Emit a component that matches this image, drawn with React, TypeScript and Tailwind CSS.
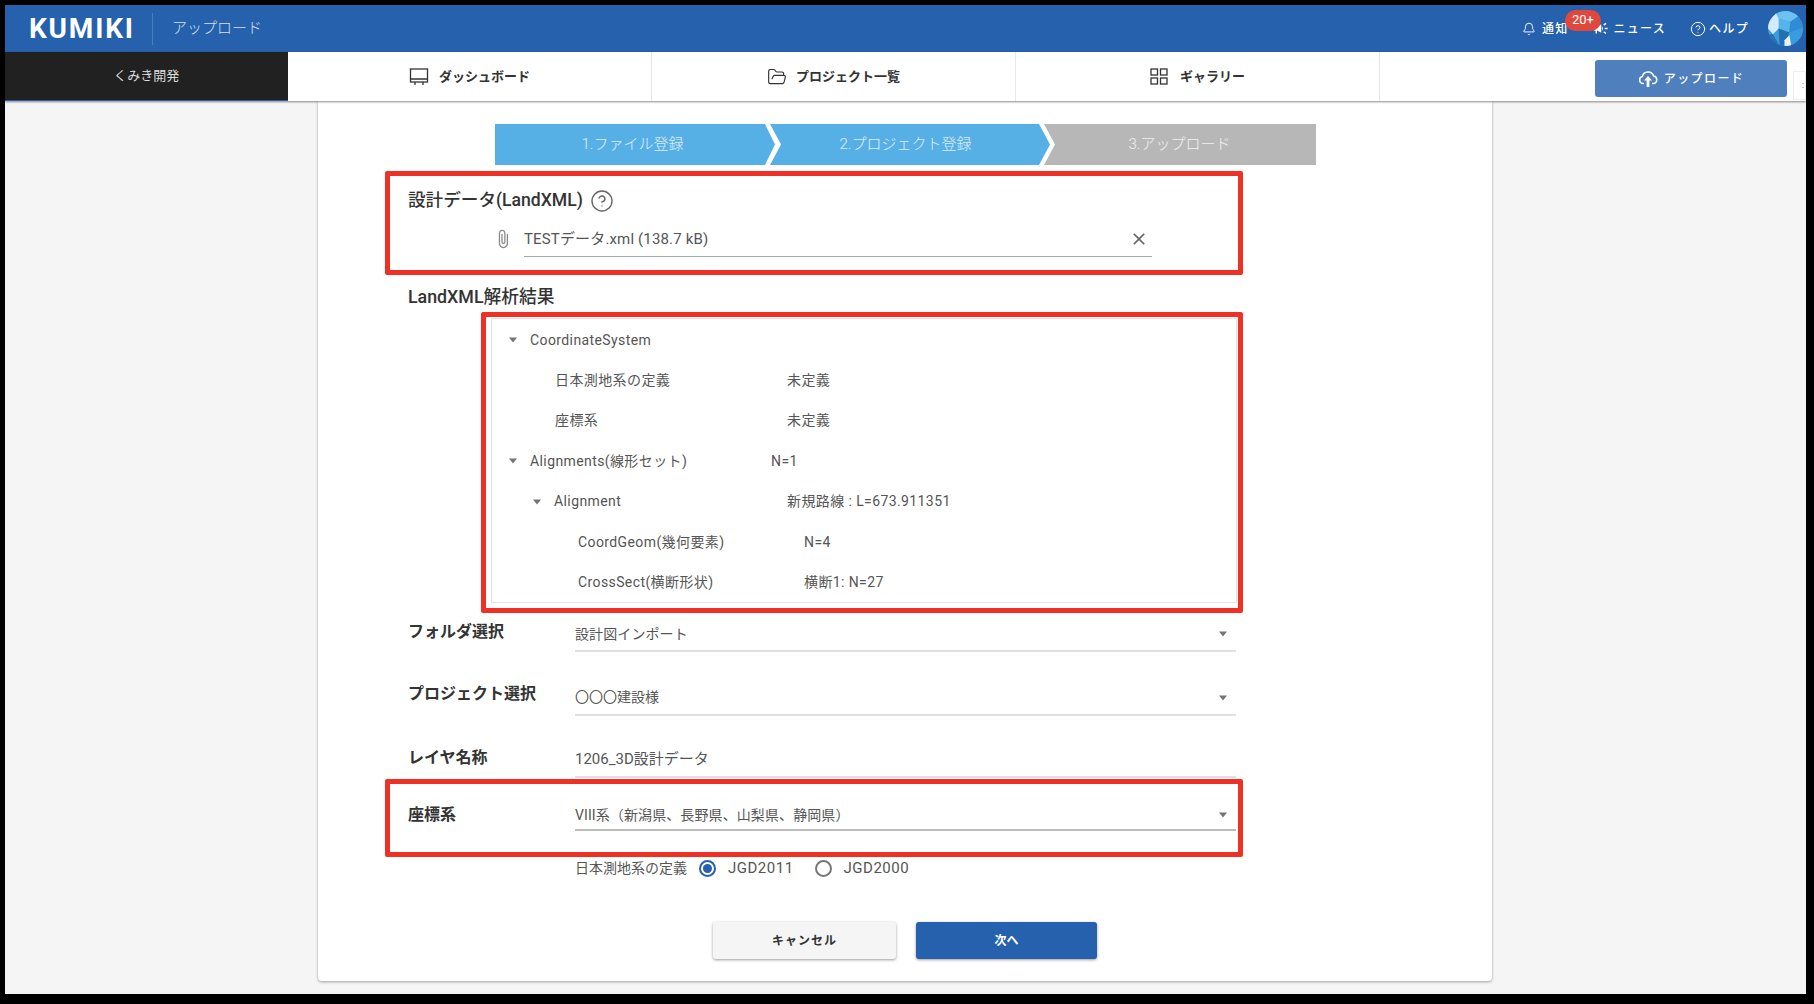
import React from "react";
import { Bell, CircleHelp, FolderOpen } from "lucide-react";
import { MdAttachFile, MdCampaign, MdClose } from "react-icons/md";

function Caret({ className = "" }: { className?: string }) {
  return (
    <svg width="10" height="6" viewBox="0 0 10 6" className={className}>
      <path d="M1 0.5h8L5 5.5z" fill="#757575" />
    </svg>
  );
}

function MonitorIcon() {
  return (
    <svg width="20" height="18" viewBox="0 0 20 18" fill="none" stroke="#333" strokeWidth="1.3">
      <rect x="1.5" y="1" width="17" height="13" />
      <path d="M1.5 11h17M6 14v3M14 14v3" />
    </svg>
  );
}

function GridIcon() {
  return (
    <svg width="18" height="17" viewBox="0 0 18 17" fill="none" stroke="#333" strokeWidth="1.3">
      <rect x="1" y="1" width="6.5" height="6" />
      <rect x="10.5" y="1" width="6.5" height="6" />
      <rect x="1" y="10" width="6.5" height="6" />
      <rect x="10.5" y="10" width="6.5" height="6" />
    </svg>
  );
}

function UploadIcon() {
  return (
    <svg width="20" height="18" viewBox="0 0 20 18">
      <path
        d="M6 13.5H5a3.6 3.6 0 0 1-.6-7.1A5.8 5.8 0 0 1 15.6 6a3.8 3.8 0 0 1 0 7.5H14"
        fill="none"
        stroke="#fff"
        strokeWidth="1.5"
      />
      <path d="M10 6l4 4.5h-2.6V17H8.6v-6.5H6z" fill="#fff" />
    </svg>
  );
}

function Avatar() {
  return (
    <svg width="35" height="35" viewBox="0 0 36 36" className="rounded-full">
      <rect width="36" height="36" fill="#3a9ce0" />
      <path d="M8 2l11-3 13 6-9 6-12-3z" fill="#6cc2f0" />
      <path d="M11 8l12 3-1 11-11-4z" fill="#56b4ec" />
      <path d="M23 11l9-6 4 12-14 5z" fill="#2f8bd6" />
      <path d="M0 10l8-8 3 6 0 10-6 6-5-6z" fill="#d4ecf9" />
      <path d="M0 24l5 0 7 12H0z" fill="#2a6fae" />
      <path d="M11 18l11 4-5 14h-5z" fill="#2470ae" />
      <path d="M17 30l5-5 2 11h-7z" fill="#e6f1f8" />
      <path d="M24 24l12-5v17H24z" fill="#3b9be0" />
    </svg>
  );
}

function TreeRow({
  pad,
  labelW,
  caret,
  label,
  value,
}: {
  pad: string;
  labelW: string;
  caret?: boolean;
  label: string;
  value?: string;
}) {
  return (
    <div className={`flex items-center h-[40.4px] text-[14px] tracking-[0.4px] text-[#555] ${pad}`}>
      {caret && <Caret className="mr-[12px]" />}
      <span className={`whitespace-nowrap ${labelW}`}>{label}</span>
      {value && <span className="whitespace-nowrap">{value}</span>}
    </div>
  );
}

export default function App() {
  return (
    <div className="h-screen w-screen overflow-hidden bg-black pt-[5px] pl-[5px] pr-[8px] pb-[10px] font-['Roboto','Noto_Sans_CJK_JP',sans-serif]">
      <div className="h-full bg-[#f5f5f5] flex flex-col">
        {/* header */}
        <div className="h-[47px] shrink-0 bg-[#2561ac] flex items-center pl-[24px] pr-[3px] text-white">
          <span className="text-[28px] font-bold tracking-[1.8px] leading-none w-[123px]">KUMIKI</span>
          <div className="w-px h-[32px] bg-[#4a7fbd]" />
          <span className="ml-[19px] text-[15px] font-light text-[#d5e0ef]">アップロード</span>

          <div className="ml-auto flex items-center text-[12px] font-medium tracking-[1.3px]">
            <div className="relative flex items-center gap-[6px] h-[16px]">
              <Bell size={14} strokeWidth={1.6} />
              <span>通知</span>
              <span className="absolute left-[43px] top-[-11px] w-[36px] h-[21px] rounded-full bg-[#e0483e] flex items-center justify-center text-[13px] font-normal tracking-normal">
                20+
              </span>
            </div>
            <div className="flex items-center gap-[4px] ml-[24px]">
              <MdCampaign size={17} />
              <span>ニュース</span>
            </div>
            <div className="flex items-center gap-[3px] ml-[24px]">
              <CircleHelp size={16} strokeWidth={1.5} />
              <span>ヘルプ</span>
            </div>
            <div className="ml-[19px]">
              <Avatar />
            </div>
          </div>
        </div>

        {/* nav */}
        <div className="h-[49px] shrink-0 bg-white flex shadow-[0_1px_2px_rgba(0,0,0,0.45)] relative z-10">
          <div className="w-[283px] bg-[#212121] border-b border-[#2561ac] flex items-center justify-center text-[13px] text-[#ddd]">
            くみき開発
          </div>
          <div className="w-[364px] border-r border-[#e8e8e8] flex items-center justify-center gap-[10px] text-[13px] font-bold text-[#333]">
            <MonitorIcon />
            ダッシュボード
          </div>
          <div className="w-[364px] border-r border-[#e8e8e8] flex items-center justify-center gap-[9px] text-[13px] font-bold text-[#333]">
            <FolderOpen size={20} strokeWidth={1.4} className="text-[#333]" />
            プロジェクト一覧
          </div>
          <div className="w-[364px] border-r border-[#e8e8e8] flex items-center justify-center gap-[12px] text-[13px] font-bold text-[#333]">
            <GridIcon />
            ギャラリー
          </div>
          <button className="ml-[215px] mt-[8px] w-[192px] h-[37px] rounded-[3px] bg-[#4f80bd] flex items-center justify-center gap-[6px] text-white text-[12px] font-medium tracking-[1.4px]">
            <UploadIcon />
            アップロード
          </button>
          <div className="ml-[6px] mt-[19px] w-[13px] h-[29px] border border-[#eee] flex items-center justify-end overflow-hidden text-[9px] text-[#555]">
            <span className="mr-[1px]">:</span>
          </div>
        </div>

        {/* card */}
        <div className="ml-[313px] w-[1174px] bg-white rounded-b-[4px] shadow-[0_1px_3px_rgba(0,0,0,0.35)] pt-[23px] pb-[22px]">
          {/* stepper */}
          <div className="ml-[177px] flex text-[15px] font-light text-white/80 h-[41px]">
            <div className="w-[280px] pr-[5px] bg-[#56b0e6] flex items-center justify-center [clip-path:polygon(0_0,270px_0,280px_50%,270px_100%,0_100%)]">
              1.ファイル登録
            </div>
            <div className="w-[280px] pr-[9px] -ml-[5px] bg-[#56b0e6] flex items-center justify-center [clip-path:polygon(0_0,269px_0,280px_50%,269px_100%,0_100%,11px_50%)]">
              2.プロジェクト登録
            </div>
            <div className="w-[272px] pr-[1px] -ml-[6px] bg-[#b7b7b7] flex items-center justify-center [clip-path:polygon(0_0,100%_0,100%_100%,0_100%,11px_50%)]">
              3.アップロード
            </div>
          </div>

          <div className="ml-[67px] w-[858px] mt-[6px]">
            {/* 設計データ */}
            <div className="h-[104px] border-[5px] border-[#ee3124] rounded-[2px] pt-[13px] pl-[18px]">
              <div className="flex items-center gap-[7px] h-[24px] text-[17.6px] font-medium text-[#333] leading-none">
                設計データ(LandXML)
                <CircleHelp size={24} strokeWidth={1.4} className="text-[#666]" />
              </div>
              <div className="flex items-center mt-[8px] ml-[85px] h-[36px]">
                <MdAttachFile size={20} className="text-[#888] mr-[11px]" />
                <div className="flex-1 mr-[86px] h-[36px] border-b border-[#aaa] flex items-center justify-between pr-[3px] pt-[1px] text-[15px] tracking-[0.15px] text-[#555]">
                  TESTデータ.xml (138.7 kB)
                  <MdClose size={20} className="text-[#666]" />
                </div>
              </div>
            </div>

            <div className="mt-[11px] ml-[23px] h-[23px] text-[17.8px] font-medium text-[#333] flex items-center">
              LandXML解析結果
            </div>

            {/* 解析結果 */}
            <div className="mt-[3px] ml-[96px] h-[301px] border-[5px] border-[#ee3124] rounded-[2px] pl-[5px] pr-px pt-px">
              <div className="h-[285px] border border-[#e4e4e4] pt-px">
                <TreeRow pad="pl-[16px]" labelW="" caret label="CoordinateSystem" />
                <TreeRow pad="pl-[63px]" labelW="w-[232px]" label="日本測地系の定義" value="未定義" />
                <TreeRow pad="pl-[63px]" labelW="w-[232px]" label="座標系" value="未定義" />
                <TreeRow pad="pl-[16px]" labelW="w-[241px]" caret label="Alignments(線形セット)" value="N=1" />
                <TreeRow pad="pl-[40px]" labelW="w-[233px]" caret label="Alignment" value="新規路線 : L=673.911351" />
                <TreeRow pad="pl-[86px]" labelW="w-[226px]" label="CoordGeom(幾何要素)" value="N=4" />
                <TreeRow pad="pl-[86px]" labelW="w-[226px]" label="CrossSect(横断形状)" value="横断1: N=27" />
              </div>
            </div>

            {/* form */}
            <div className="ml-[23px] w-[828px]">
              <div className="flex mt-[4px]">
                <div className="w-[167px] h-[35px] pb-[6px] flex items-center text-[16px] font-bold text-[#333]">フォルダ選択</div>
                <div className="flex-1 h-[35px] border-b-2 border-[#e0e0e0] flex items-center justify-between pt-[1px] pr-[8px] text-[14px] tracking-[0.1px] text-[#555]">
                  設計図インポート
                  <Caret />
                </div>
              </div>
              <div className="flex mt-[29px]">
                <div className="w-[167px] h-[35px] pb-[10px] flex items-center text-[16px] font-bold text-[#333]">プロジェクト選択</div>
                <div className="flex-1 h-[35px] border-b-2 border-[#e0e0e0] flex items-center justify-between pr-[8px] text-[14px] text-[#555]">
                  〇〇〇建設様
                  <Caret />
                </div>
              </div>
              <div className="flex mt-[27px]">
                <div className="w-[167px] h-[35px] pb-[6px] flex items-center text-[16px] font-bold text-[#333]">レイヤ名称</div>
                <div className="flex-1 h-[35px] border-b-2 border-[#e0e0e0] flex items-center text-[15px] text-[#555]">
                  1206_3D設計データ
                </div>
              </div>
            </div>

            {/* 座標系 */}
            <div className="mt-px h-[78px] border-[5px] border-[#ee3124] rounded-[2px] pt-[15px] pl-[18px]">
              <div className="flex w-[828px]">
                <div className="w-[167px] h-[31px] flex items-center text-[16px] font-bold text-[#333]">座標系</div>
                <div className="flex-1 h-[32px] border-b-2 border-[#bbb] flex items-center justify-between pt-[2px] pr-[8px] text-[14px] tracking-[0.1px] text-[#555]">
                  VIII系（新潟県、長野県、山梨県、静岡県）
                  <Caret />
                </div>
              </div>
            </div>

            {/* radio */}
            <div className="ml-[190px] h-[22px] flex items-center text-[14px] text-[#555]">
              日本測地系の定義
              <span className="ml-[12px] w-[17px] h-[17px] rounded-full border-2 border-[#2561ac] flex items-center justify-center">
                <span className="w-[9px] h-[9px] rounded-full bg-[#2561ac]" />
              </span>
              <span className="ml-[12px] text-[15px] tracking-[0.5px]">JGD2011</span>
              <span className="ml-[21px] w-[17px] h-[17px] rounded-full border-2 border-[#777]" />
              <span className="ml-[12px] text-[15px] tracking-[0.5px]">JGD2000</span>
            </div>

            {/* buttons */}
            <div className="flex ml-[328px] mt-[43px] gap-[20px]">
              <button className="w-[183px] h-[37px] rounded-[3px] bg-[#f5f5f5] shadow-[0_1px_3px_rgba(0,0,0,0.4)] text-[12px] font-bold tracking-[1px] text-[#333]">
                キャンセル
              </button>
              <button className="w-[181px] h-[37px] rounded-[3px] bg-[#2561ac] shadow-[0_1px_3px_rgba(0,0,0,0.4)] text-[12px] font-bold text-white">
                次へ
              </button>
            </div>
          </div>
        </div>
      </div>
    </div>
  );
}
